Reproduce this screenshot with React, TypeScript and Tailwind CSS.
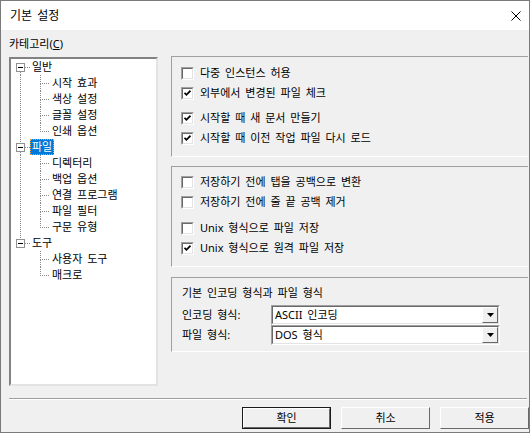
import React from 'react';

type Node = { label: string; selected?: boolean; children: string[] };

const tree: Node[] = [
  { label: '일반', children: ['시작 효과', '색상 설정', '글꼴 설정', '인쇄 옵션'] },
  { label: '파일', selected: true, children: ['디렉터리', '백업 옵션', '연결 프로그램', '파일 필터', '구문 유형'] },
  { label: '도구', children: ['사용자 도구', '매크로'] },
];

// dotted tree connectors (1px on, 1px off)
const vLine = 'h-full w-px bg-[linear-gradient(#8a8a8a_50%,transparent_50%)] bg-[length:1px_2px]';
const hLine = 'h-px w-full bg-[linear-gradient(to_right,#8a8a8a_50%,transparent_50%)] bg-[length:2px_1px]';

function TopRow({ node, first, last }: { node: Node; first: boolean; last: boolean }) {
  return (
    <div className="flex h-4">
      <div className="w-[5px]" />
      <div className="flex w-[9px] flex-col">
        <div className="flex h-[4px] justify-center">{!first && <div className={vLine} />}</div>
        <div className="flex h-[9px] items-center justify-center border border-[#919191] bg-white">
          <div className="h-px w-[5px] bg-black" />
        </div>
        <div className="flex h-[3px] justify-center">{!last && <div className={vLine} />}</div>
      </div>
      <div className="flex w-[5px] flex-col">
        <div className="h-[8px]" />
        <div className={hLine} />
      </div>
      <div
        className={
          node.selected
            ? 'bg-[#0078d7] px-[2px] leading-[16px] text-white outline outline-1 outline-dotted outline-offset-[-1px] outline-[#f0a040]'
            : 'px-[2px] leading-[16px]'
        }
      >
        {node.label}
      </div>
    </div>
  );
}

function ChildRow({ label, parentLast, lastChild }: { label: string; parentLast: boolean; lastChild: boolean }) {
  return (
    <div className="flex h-4">
      <div className="w-[9px]" />
      <div className="w-[20px]">{!parentLast && <div className={vLine} />}</div>
      <div className="flex w-[10px] flex-col">
        <div className="h-[8px]">
          <div className={vLine} />
        </div>
        <div className={hLine} />
        <div className="flex-1">{!lastChild && <div className={vLine} />}</div>
      </div>
      <div className="px-[2px] leading-[16px]">{label}</div>
    </div>
  );
}

function CheckBox({ checked }: { checked: boolean }) {
  return (
    <div className="h-[13px] w-[13px] border border-b-white border-l-[#a0a0a0] border-r-white border-t-[#a0a0a0]">
      <div className="flex h-full w-full items-center justify-center border border-b-[#e3e3e3] border-l-[#696969] border-r-[#e3e3e3] border-t-[#696969] bg-white">
        {checked && (
          <svg width="7" height="7" viewBox="0 0 7 7">
            <path d="M0.5 2.8 L2.4 4.8 L6.5 0.7" fill="none" stroke="#000" strokeWidth="1.7" />
          </svg>
        )}
      </div>
    </div>
  );
}

function CheckRow({ label, checked }: { label: string; checked: boolean }) {
  return (
    <div className="flex h-5 items-center">
      <CheckBox checked={checked} />
      <span className="ml-[6px] leading-[16px]">{label}</span>
    </div>
  );
}

function Combo({ value }: { value: string }) {
  return (
    <div className="h-5 w-[229px] border border-b-white border-l-[#a0a0a0] border-r-white border-t-[#a0a0a0]">
      <div className="flex h-full items-stretch border border-b-[#e3e3e3] border-l-[#696969] border-r-[#e3e3e3] border-t-[#696969] bg-white">
        <div className="flex-1 pl-[2px] leading-[16px]">{value}</div>
        <div className="flex w-[16px] items-center justify-center border border-b-[#696969] border-l-white border-r-[#696969] border-t-white bg-[#f0f0f0]">
          <svg width="7" height="4" viewBox="0 0 7 4">
            <path d="M0 0 H7 L3.5 4 Z" fill="#000" />
          </svg>
        </div>
      </div>
    </div>
  );
}

function Panel({ className, children }: { className: string; children: React.ReactNode }) {
  return (
    <div className={`border-b border-l border-t border-b-white border-l-[#a0a0a0] border-t-[#a0a0a0] pl-[9px] ${className}`}>
      {children}
    </div>
  );
}

function DialogButton({ label, primary }: { label: string; primary?: boolean }) {
  return (
    <div className={primary ? 'h-[22px] w-[89px] border border-[#1a1a1a]' : 'h-[22px] w-[89px]'}>
      <div className="flex h-full items-center justify-center border border-b-[#696969] border-l-white border-r-[#696969] border-t-white bg-[#f0f0f0] leading-[16px]">
        {label}
      </div>
    </div>
  );
}

export default function App() {
  return (
    <div className="h-[433px] w-[532px] bg-white font-['Noto_Sans','Noto_Sans_CJK_KR',sans-serif] text-[11px] text-black [word-spacing:2px]">
      <div className="flex h-[433px] w-[530px] flex-col border border-[#7a7a7a] bg-[#f0f0f0]">
        <div className="flex h-[29px] items-center justify-between bg-white pl-[9px] pr-[8px]">
          <span className="text-[12px] leading-[16px]">기본 설정</span>
          <svg width="10" height="10" viewBox="0 0 10 10">
            <path d="M0.5 0.5 L9.5 9.5 M9.5 0.5 L0.5 9.5" stroke="#000" strokeWidth="1" />
          </svg>
        </div>

        <div className="flex pl-[8px]">
          <div className="flex w-[149px] flex-col">
            <div className="h-[27px] pt-[6px] leading-[16px]">
              카테고리(<span className="underline">C</span>)
            </div>
            <div className="h-[329px] border-2 border-b-[#e3e3e3] border-l-[#828282] border-r-[#e3e3e3] border-t-[#828282] bg-white">
              {tree.map((node, i) => (
                <div key={node.label}>
                  <TopRow node={node} first={i === 0} last={i === tree.length - 1} />
                  {node.children.map((c, j) => (
                    <ChildRow
                      key={c}
                      label={c}
                      parentLast={i === tree.length - 1}
                      lastChild={j === node.children.length - 1}
                    />
                  ))}
                </div>
              ))}
            </div>
          </div>

          <div className="ml-[13px] flex w-[357px] flex-col pt-[26px]">
            <Panel className="h-[101px] pt-[6px]">
              <CheckRow label="다중 인스턴스 허용" checked={false} />
              <CheckRow label="외부에서 변경된 파일 체크" checked />
              <div className="h-[5px]" />
              <CheckRow label="시작할 때 새 문서 만들기" checked />
              <CheckRow label="시작할 때 이전 작업 파일 다시 로드" checked />
            </Panel>
            <Panel className="mt-[9px] h-[101px] pt-[5px]">
              <CheckRow label="저장하기 전에 탭을 공백으로 변환" checked={false} />
              <CheckRow label="저장하기 전에 줄 끝 공백 제거" checked={false} />
              <div className="h-[6px]" />
              <CheckRow label="Unix 형식으로 파일 저장" checked={false} />
              <CheckRow label="Unix 형식으로 원격 파일 저장" checked />
            </Panel>
            <Panel className="mt-[10px] h-[75px] pl-[10px] pt-[7px]">
              <div className="leading-[16px]">기본 인코딩 형식과 파일 형식</div>
              <div className="mt-[4px] flex h-5 items-center">
                <div className="w-[89px] leading-[16px]">인코딩 형식:</div>
                <Combo value="ASCII 인코딩" />
              </div>
              <div className="flex h-5 items-center">
                <div className="w-[89px] leading-[16px]">파일 형식:</div>
                <Combo value="DOS 형식" />
              </div>
            </Panel>
          </div>
        </div>

        <div className="ml-[8px] mt-[12px] h-[2px] w-[518px] border-b border-t border-b-white border-t-[#a0a0a0]" />

        <div className="ml-[241px] mt-[7px] flex gap-[10px]">
          <DialogButton label="확인" primary />
          <DialogButton label="취소" />
          <DialogButton label="적용" />
        </div>
      </div>
    </div>
  );
}
